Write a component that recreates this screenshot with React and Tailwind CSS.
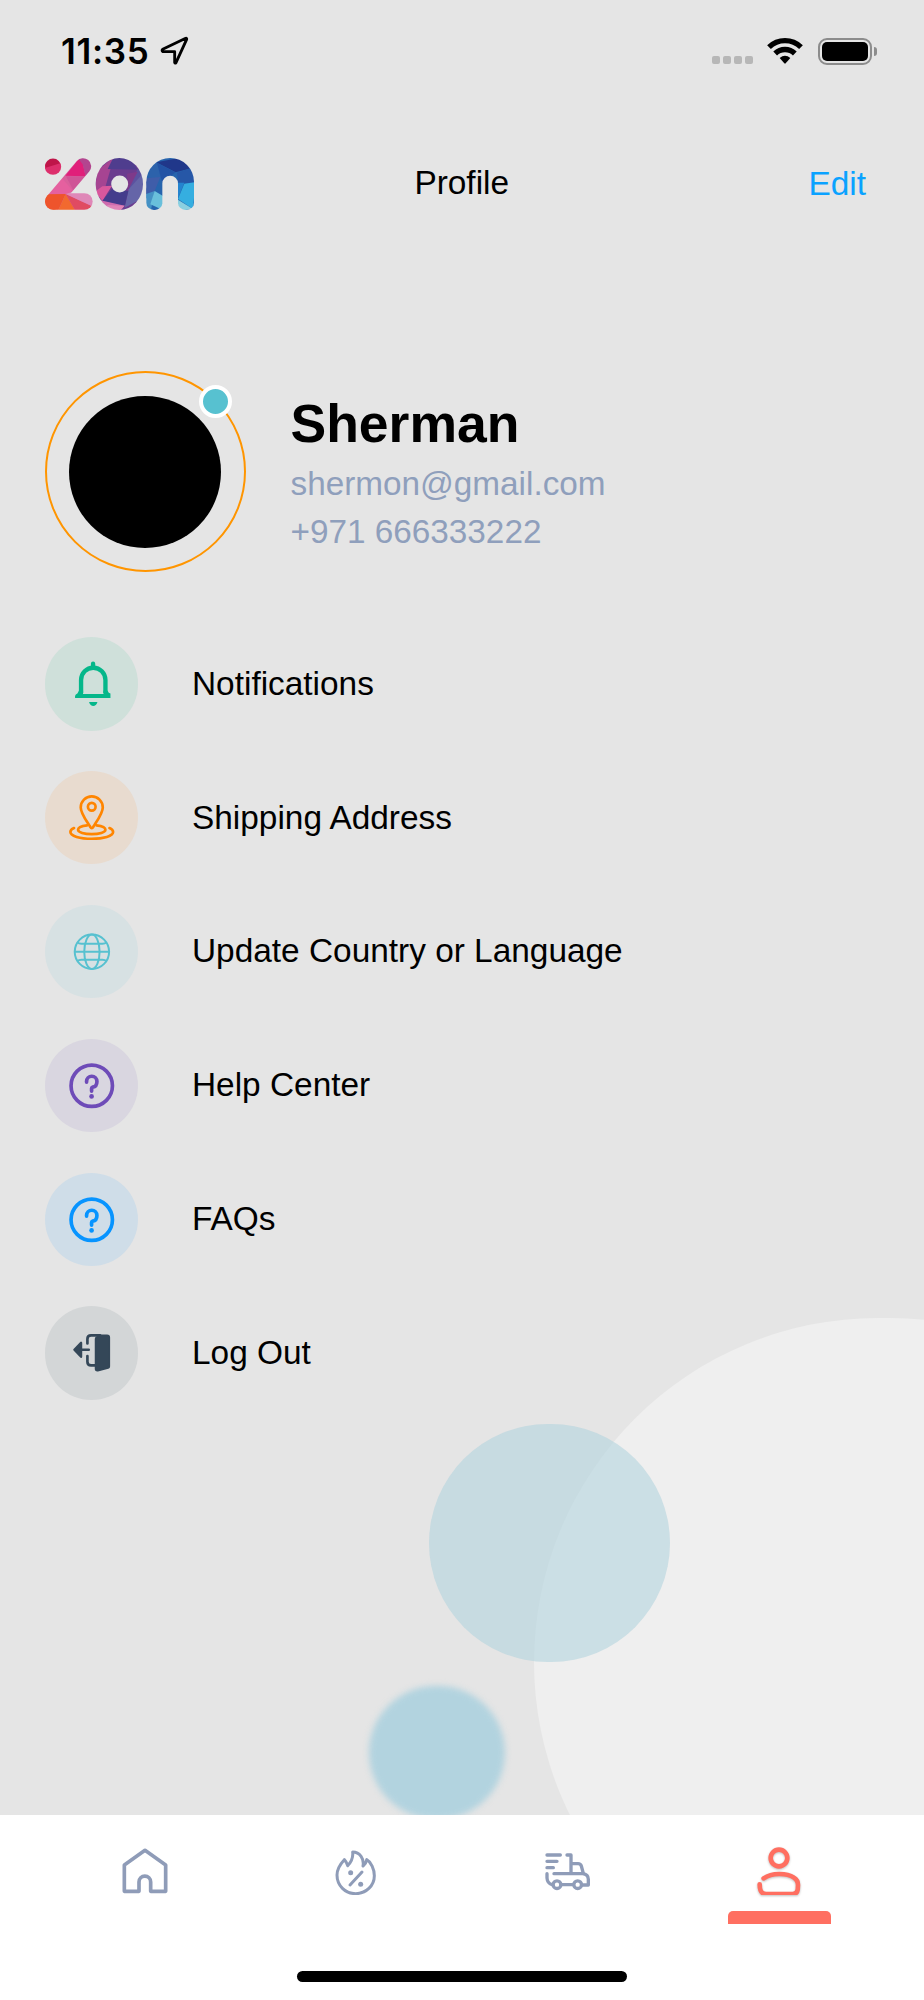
import { useState } from "react";

const BellIcon = () => (
  <svg viewBox="0 0 280 280" className="h-full w-full" fill="none" stroke="#05b78a" strokeWidth="13">
    <path d="M144 80V90" strokeLinecap="round" />
    <path d="M108 168V129A36.500 37 0 0 1 181 129V168" />
    <path d="M90 183V177Q91 171 97 169L102 160H114V171H175V160H187L191 167L196 169V183Z" fill="#05b78a" stroke="none" />
    <path d="M132 195H157C155 203 150 207 144.500 207C139 207 134 203 132 195Z" fill="#05b78a" stroke="none" />
  </svg>
);

const PinIcon = () => (
  <svg viewBox="0 0 280 280" className="h-full w-full" fill="none" stroke="#ff8500" strokeWidth="8" strokeLinecap="round" strokeLinejoin="round">
    <path d="M140 171C137 171 136 168 134 165C127 153 107 127 107 109A33 33 0 0 1 173 109C173 127 153 153 146 165C144 168 143 171 140 171Z" />
    <circle cx="140" cy="107" r="11.500" />
    <path d="M126 163C109 165 99 169 99 176C99 184 118 189 140 189S181 184 181 176C181 169 171 165 154 163" />
    <path d="M87 171C80 174 76 178 76 183C76 195 105 203 140 203S204 195 204 183C204 178 200 174 193 171" />
  </svg>
);

const GlobeIcon = () => (
  <svg viewBox="0 0 280 280" className="h-full w-full" fill="none" stroke="#57c1d0" strokeWidth="6">
    <circle cx="140.500" cy="140" r="51.500" />
    <ellipse cx="140.500" cy="140" rx="23" ry="51.500" />
    <path d="M88 140H193M97 112Q101 116 109 116H172Q180 116 184 112M97 168Q101 164 109 164H172Q180 164 184 168" />
  </svg>
);

const QuestionIcon = ({ color }) => (
  <svg viewBox="0 0 280 280" className="h-full w-full" fill="none" stroke={color} strokeWidth="11" strokeLinecap="round" strokeLinejoin="round">
    <circle cx="140" cy="140" r="62" />
    <path d="M124.500 129V127A15.500 15.500 0 0 1 155.500 127C155.500 137 150 143 143 144Q139.500 145 139.500 148V156" />
    <circle cx="139.500" cy="172" r="7" fill={color} stroke="none" />
  </svg>
);

const LogoutIcon = () => (
  <svg viewBox="0 0 280 280" className="h-full w-full" fill="none" stroke="#344758" strokeWidth="8" strokeLinecap="round" strokeLinejoin="round">
    <path d="M127 112V99Q127 88 138 88H165M127 150V167Q127 178 138 178H152" />
    <path d="M152 99Q152 96 155 94L163 88H186Q192 88 192 94V181Q192 184 189 185L158 193Q152 194 152 189Z" fill="#344758" strokeWidth="6" />
    <path d="M108 110V152L88 131Z" fill="#344758" strokeWidth="7" />
    <path d="M108 131H131" />
  </svg>
);

const HomeIcon = () => (
  <svg viewBox="0 0 144 144" className="h-12 w-12" fill="none" stroke="#8f9cb8" strokeWidth="11" strokeLinejoin="round">
    <path d="M54 133H10V54L72 10L134 54V133H89V105A17.500 17.500 0 0 0 54 105Z" />
  </svg>
);

const FlameIcon = () => (
  <svg viewBox="0 0 144 144" className="h-12 w-12" fill="none" stroke="#8f9cb8" strokeWidth="9" strokeLinecap="round" strokeLinejoin="round">
    <path d="M37 38C23 53 15 69 15 84C15 116 40 140 71 140C102 140 127 116 127 86C127 66 117 45 104 38C103 45 99 52 93 57C97 36 84 15 62 15C64 32 58 45 47 56C45 49 42 43 37 38Z" />
    <path d="M90 75L54 114" />
    <circle cx="56" cy="77" r="7.500" fill="#8f9cb8" stroke="none" />
    <circle cx="86" cy="112" r="7.500" fill="#8f9cb8" stroke="none" />
  </svg>
);

const TruckIcon = () => (
  <svg viewBox="0 0 144 144" className="h-12 w-12" fill="none" stroke="#8f9cb8" strokeWidth="10" strokeLinecap="round" strokeLinejoin="round">
    <path d="M9 24H49M9 43H39M9 62H28" />
    <path d="M69 24H81V79M81 50H102Q110 50 112 57L118 79" />
    <path d="M30 80H116Q133 82 133 97V114H115M52 113H87M9 80V93Q10 109 24 113" />
    <circle cx="39" cy="113" r="11.500" />
    <circle cx="101" cy="113" r="11.500" />
  </svg>
);

const PersonIcon = () => (
  <svg viewBox="0 0 144 144" className="h-12 w-12 drop-shadow-[0_1px_1px_rgba(0,0,0,0.25)]" fill="none" stroke="#ff6f61" strokeWidth="14" strokeLinecap="round">
    <circle cx="72" cy="33" r="25" />
    <path d="M26 94C51 77 94 77 117 92C127 98 129 104 129 114C129 131 127 141 113 141H33C18 141 14 131 14 112" />
  </svg>
);

const ZonLogo = () => (
  <svg viewBox="44 51 450 156" className="h-[52px] w-[150px]">
    <defs>
      <mask id="zonShape">
        <circle cx="68" cy="77" r="24.500" fill="#fff" />
        <line x1="158" y1="76" x2="69" y2="181" stroke="#fff" strokeWidth="49" strokeLinecap="round" />
        <line x1="69" y1="181.500" x2="162" y2="181.500" stroke="#fff" strokeWidth="50" strokeLinecap="round" />
        <ellipse cx="267" cy="129" rx="71" ry="78" fill="#fff" />
        <circle cx="268" cy="129" r="25.500" fill="#000" />
        <circle cx="419.500" cy="122.500" r="71.500" fill="#fff" />
        <rect x="348" y="122" width="48" height="85" rx="22" fill="#fff" />
        <rect x="348" y="122" width="48" height="50" fill="#fff" />
        <rect x="443" y="122" width="48" height="85" rx="22" fill="#fff" />
        <rect x="443" y="122" width="48" height="50" fill="#fff" />
        <rect x="396" y="104" width="47" height="130" rx="23.500" fill="#000" />
      </mask>
    </defs>
    <g mask="url(#zonShape)">
      {/* z */}
      <rect x="40" y="48" width="150" height="162" fill="#d9609b" />
      <polygon points="40,48 95,48 95,105 40,105" fill="#dd2f6c" />
      <polygon points="40,48 95,48 92,66 46,80" fill="#bf1549" />
      <polygon points="105,104 150,48 158,70 166,106" fill="#e01f7a" />
      <polygon points="140,48 190,48 190,90 166,106 157,70" fill="#b3458f" />
      <polygon points="107,106 166,106 130,150" fill="#cf5597" />
      <polygon points="90,106 128,150 105,160 40,160" fill="#e5609f" />
      <polygon points="40,160 106,159 84,207 40,207" fill="#ee542c" />
      <polygon points="106,159 84,207 134,207" fill="#f2692f" />
      <polygon points="106,159 134,207 190,207 186,196" fill="#e04b62" />
      <polygon points="106,159 122,154 190,154 190,198" fill="#df88b8" />
      {/* o */}
      <rect x="194" y="48" width="146" height="162" fill="#6b3c8f" />
      <polygon points="250,48 200,90 194,150 225,138 240,86" fill="#a64492" />
      <polygon points="250,48 232,84 322,86 300,48" fill="#4f3d8e" />
      <polygon points="322,84 340,96 340,140 292,142" fill="#5b52a0" />
      <polygon points="290,98 322,92 292,150" fill="#7e3a8a" />
      <polygon points="336,100 340,170 283,200 295,145" fill="#6565a8" />
      <polygon points="194,152 216,136 245,134 216,180" fill="#d9579d" />
      <polygon points="244,145 294,150 283,196 216,180" fill="#443c8c" />
      <polygon points="210,178 283,194 262,207 215,207" fill="#cf6cae" />
      <polygon points="230,192 283,194 272,207 240,207" fill="#e084b8" />
      {/* n */}
      <rect x="345" y="48" width="150" height="162" fill="#2664ad" />
      <polygon points="378,64 462,48 488,80 436,94" fill="#20378a" />
      <polygon points="360,80 380,64 392,108 348,150" fill="#2c62ab" />
      <polygon points="380,66 435,94 396,125" fill="#2353a5" />
      <polygon points="346,112 390,108 372,152 346,160" fill="#3f5da9" />
      <polygon points="345,160 373,150 362,207 345,207" fill="#4591c4" />
      <polygon points="373,150 398,165 398,207 360,190" fill="#69bfdb" />
      <polygon points="440,95 492,78 492,125 444,130" fill="#2657a7" />
      <polygon points="443,125 462,125 443,172" fill="#2484cf" />
      <polygon points="462,128 492,124 492,160 488,204 443,174" fill="#35aee0" />
      <polygon points="443,176 488,204 443,210" fill="#8acfe0" />
    </g>
  </svg>
);

const StatusBar = () => (
  <div className="flex h-[102px] items-center justify-between pr-[47px] pl-[61px]">
    <div className="flex items-center gap-[10px]">
      <span className="font-['Inter'] text-[35px] leading-none font-semibold tracking-[0.7px]">11:35</span>
      <svg viewBox="390 78 90 90" className="mb-px h-[30px] w-[30px]" fill="none" stroke="#000" strokeWidth="8.500" strokeLinecap="round" strokeLinejoin="round">
        <path d="M467 85Q471 84 470 88L438 158Q435 161 434 157V125H399Q394 122 398 118Z" />
      </svg>
    </div>
    <div className="flex items-center">
      <div className="mt-[18px] mr-[14px] flex gap-[3px]">
        {[1, 2, 3, 4].map((dot) => (
          <span key={dot} className="h-2 w-2 rounded-[2px] bg-[#b7b7b7]" />
        ))}
      </div>
      <svg viewBox="231 76 108 90" className="mr-[15px] h-[30px] w-9" fill="none" stroke="#000" strokeWidth="16">
        <path d="M237 109.500A69 69 0 0 1 333 109.500" />
        <path d="M255.500 128.500A42 42 0 0 1 314.500 128.500" />
        <path d="M269 142Q285 129 301 142L287 158Q285 160 283 158Z" fill="#000" stroke="none" />
      </svg>
      <div className="flex items-center gap-[2px]">
        <div className="h-[27px] w-[54px] rounded-[9px] border-2 border-[#8c8c8c] p-[2px]">
          <div className="h-full w-full rounded-[5px] bg-black" />
        </div>
        <div className="h-[9px] w-[3px] rounded-r-full bg-[#8c8c8c]" />
      </div>
    </div>
  </div>
);

const menuItems = [
  { label: "Notifications", bg: "bg-[#cfe0da]", icon: <BellIcon /> },
  { label: "Shipping Address", bg: "bg-[#e8dbcf]", icon: <PinIcon /> },
  { label: "Update Country or Language", bg: "bg-[#d7e1e3]", icon: <GlobeIcon /> },
  { label: "Help Center", bg: "bg-[#d9d6e0]", icon: <QuestionIcon color="#6e4bb8" /> },
  { label: "FAQs", bg: "bg-[#cfdde8]", icon: <QuestionIcon color="#0794ff" /> },
  { label: "Log Out", bg: "bg-[#d3d6d7]", icon: <LogoutIcon /> },
];

const tabs = [
  { id: "home", icon: <HomeIcon /> },
  { id: "offers", icon: <FlameIcon /> },
  { id: "orders", icon: <TruckIcon /> },
  { id: "profile", icon: <PersonIcon /> },
];

const App = () => {
  const [activeTab, setActiveTab] = useState("profile");

  return (
    <div className="relative flex h-[2000px] w-[924px] flex-col overflow-hidden bg-[#e5e5e5] font-['Liberation_Sans',sans-serif] text-black">
      {/* Background bubbles */}
      <div className="absolute top-[1318px] left-[534px] h-[688px] w-[700px] rounded-full bg-[#efefef]" />
      <div className="absolute top-[1424px] left-[429px] h-[238px] w-[241px] rounded-full bg-[#b3d3de]/60" />
      <div className="absolute top-[1686px] left-[369px] h-[133px] w-[136px] rounded-full bg-[#b2d3df] blur-[3px]" />

      <div className="relative flex flex-1 flex-col">
        <StatusBar />

        {/* Header */}
        <header className="grid h-[163px] grid-cols-3 items-center pr-[58px] pl-[44.500px] text-[33.400px]">
          <ZonLogo />
          <h1 className="pl-[13px] text-center">Profile</h1>
          <button className="pt-[2px] text-right text-[#0aa2ff]">Edit</button>
        </header>

        {/* User card */}
        <section className="mt-[106px] flex items-center pl-[44.500px]">
          <div className="relative flex h-[201px] w-[201px] items-center justify-center rounded-full border-2 border-[#ff9500]">
            <div className="h-[152px] w-[152px] rounded-full bg-black" />
            <span className="absolute top-[12px] right-[12px] h-[33px] w-[33px] rounded-full border-4 border-white bg-[#57c1d0]" />
          </div>
          <div className="mt-[7px] ml-[45px]">
            <h2 className="text-[53.500px] leading-[60px] font-bold">Sherman</h2>
            <p className="mt-[6px] text-[33.300px] leading-[48px] text-[#8f9fbc]">shermon@gmail.com</p>
            <p className="text-[33.300px] leading-[48px] text-[#8f9fbc]">+971 666333222</p>
          </div>
        </section>

        {/* Menu */}
        <nav className="mt-[65px] flex flex-col gap-[40.400px] pl-[44.500px]">
          {menuItems.map((item) => (
            <button key={item.label} className="flex items-center gap-[54px] text-left text-[33.400px]">
              <span className={`h-[93.500px] w-[93.500px] shrink-0 rounded-full ${item.bg}`}>{item.icon}</span>
              {item.label}
            </button>
          ))}
        </nav>
      </div>

      {/* Bottom tabs */}
      <footer className="relative flex h-[185px] flex-col items-center bg-white">
        <div className="ml-[39px] flex w-[846px] self-start pt-8">
          {tabs.map((tab) => (
            <button key={tab.id} onClick={() => setActiveTab(tab.id)} className="flex flex-1 flex-col items-center">
              {tab.icon}
              {activeTab === tab.id && <span className="mt-4 h-[13px] w-[103px] rounded-t-[5px] bg-[#ff6f61]" />}
            </button>
          ))}
        </div>
        <div className="mt-auto mb-[18px] h-[11px] w-[330px] rounded-full bg-black" />
      </footer>
    </div>
  );
};

export default App;
